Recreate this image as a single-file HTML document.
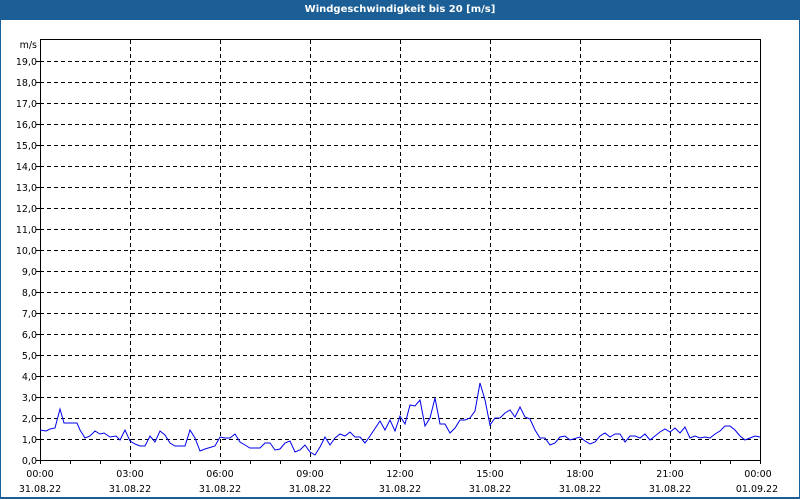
<!DOCTYPE html>
<html><head><meta charset="utf-8"><style>
html,body{margin:0;padding:0;background:#fff;}
body{width:800px;height:500px;position:relative;overflow:hidden;font-family:"DejaVu Sans","Liberation Sans",sans-serif;}
.frame{position:absolute;left:0;top:0;width:798px;height:497px;border-left:1px solid #1c5f96;border-right:1px solid #1c5f96;border-bottom:2px solid #1c5f96;}
.title{position:absolute;left:0;top:0;width:800px;height:20px;background:#1c5f96;color:#fff;font-size:10px;font-weight:bold;text-align:center;line-height:19px;}
svg{position:absolute;left:0;top:0}
svg text{font-family:"DejaVu Sans","Liberation Sans",sans-serif;font-size:9.5px;fill:#000}
</style></head><body>
<div class="frame"></div>
<div class="title">Windgeschwindigkeit bis 20 [m/s]</div>
<svg width="800" height="500" viewBox="0 0 800 500">
<g stroke="#000" stroke-width="1" stroke-dasharray="4,3" shape-rendering="crispEdges">
<line x1="40" y1="61.5" x2="760" y2="61.5"/><line x1="40" y1="82.5" x2="760" y2="82.5"/><line x1="40" y1="103.5" x2="760" y2="103.5"/><line x1="40" y1="124.5" x2="760" y2="124.5"/><line x1="40" y1="145.5" x2="760" y2="145.5"/><line x1="40" y1="166.5" x2="760" y2="166.5"/><line x1="40" y1="187.5" x2="760" y2="187.5"/><line x1="40" y1="208.5" x2="760" y2="208.5"/><line x1="40" y1="229.5" x2="760" y2="229.5"/><line x1="40" y1="250.5" x2="760" y2="250.5"/><line x1="40" y1="271.5" x2="760" y2="271.5"/><line x1="40" y1="292.5" x2="760" y2="292.5"/><line x1="40" y1="313.5" x2="760" y2="313.5"/><line x1="40" y1="334.5" x2="760" y2="334.5"/><line x1="40" y1="355.5" x2="760" y2="355.5"/><line x1="40" y1="376.5" x2="760" y2="376.5"/><line x1="40" y1="397.5" x2="760" y2="397.5"/><line x1="40" y1="418.5" x2="760" y2="418.5"/><line x1="40" y1="439.5" x2="760" y2="439.5"/>
<line x1="130.5" y1="40" x2="130.5" y2="466"/><line x1="220.5" y1="40" x2="220.5" y2="466"/><line x1="310.5" y1="40" x2="310.5" y2="466"/><line x1="400.5" y1="40" x2="400.5" y2="466"/><line x1="490.5" y1="40" x2="490.5" y2="466"/><line x1="580.5" y1="40" x2="580.5" y2="466"/><line x1="670.5" y1="40" x2="670.5" y2="466"/>
</g>
<g stroke="#000" stroke-width="1" shape-rendering="crispEdges" fill="none">
<rect x="40.5" y="39.5" width="720" height="421"/>
<path d="M40.5 460v4M70.5 460v4M100.5 460v4M160.5 460v4M190.5 460v4M250.5 460v4M280.5 460v4M340.5 460v4M370.5 460v4M430.5 460v4M460.5 460v4M520.5 460v4M550.5 460v4M610.5 460v4M640.5 460v4M700.5 460v4M730.5 460v4M760.5 460v4M36 61.5h4M36 82.5h4M36 103.5h4M36 124.5h4M36 145.5h4M36 166.5h4M36 187.5h4M36 208.5h4M36 229.5h4M36 250.5h4M36 271.5h4M36 292.5h4M36 313.5h4M36 334.5h4M36 355.5h4M36 376.5h4M36 397.5h4M36 418.5h4M36 439.5h4M36 460.5h4"/>
</g>
<polyline fill="none" stroke="#0000ee" stroke-width="1" points="40,430 46,431 50,429 55,428 60,409 64,423 77,423 80,430 85,438 90,436 95,431 100,434 104,433 110,437 116,436 120,440 125,430 130,441 135,444 140,446 145,446 150,436 155,442 160,431 165,435 170,443 175,446 185,446 190,430 195,438 200,451 205,449 215,446 220,437 225,438 230,438 235,434 240,442 245,445 250,448 260,448 265,443 270,443 275,450 280,449 285,443 290,441 295,452 300,450 305,445 310,452 315,455 320,447 325,437 330,445 335,438 340,434 345,436 350,432 355,437 360,437 365,443 370,436 380,421 385,430 390,420 395,431 400,416 405,424 410,405 415,406 420,400 425,426 430,418 435,398 440,424 445,424 450,433 455,428 460,420 465,420 470,418 475,411 480,383 485,400 490,425 495,418 500,418 505,413 510,410 515,417 520,407 525,417 530,419 535,430 540,438 545,438 550,445 555,443 560,437 565,436 570,440 580,437 585,441 590,444 595,442 600,436 605,433 610,437 615,434 620,434 625,442 630,436 635,436 640,438 645,434 650,440 655,436 660,432 665,429 670,432 675,428 680,433 685,427 690,438 695,436 700,438 705,437 710,438 715,434 720,431 725,426 730,426 735,430 740,436 745,440 750,438 755,436 760,437"/>
<g text-anchor="end">
<text x="37" y="48">m/s</text>
<text x="37" y="65">19,0</text><text x="37" y="86">18,0</text><text x="37" y="107">17,0</text><text x="37" y="128">16,0</text><text x="37" y="149">15,0</text><text x="37" y="170">14,0</text><text x="37" y="191">13,0</text><text x="37" y="212">12,0</text><text x="37" y="233">11,0</text><text x="37" y="254">10,0</text><text x="37" y="275">9,0</text><text x="37" y="296">8,0</text><text x="37" y="317">7,0</text><text x="37" y="338">6,0</text><text x="37" y="359">5,0</text><text x="37" y="380">4,0</text><text x="37" y="401">3,0</text><text x="37" y="422">2,0</text><text x="37" y="443">1,0</text><text x="37" y="464">0,0</text>
</g>
<g text-anchor="middle">
<text x="40" y="477">00:00</text><text x="130" y="477">03:00</text><text x="220" y="477">06:00</text><text x="310" y="477">09:00</text><text x="400" y="477">12:00</text><text x="490" y="477">15:00</text><text x="580" y="477">18:00</text><text x="670" y="477">21:00</text><text x="758" y="477">00:00</text>
<text x="40" y="492">31.08.22</text><text x="130" y="492">31.08.22</text><text x="220" y="492">31.08.22</text><text x="310" y="492">31.08.22</text><text x="400" y="492">31.08.22</text><text x="490" y="492">31.08.22</text><text x="580" y="492">31.08.22</text><text x="670" y="492">31.08.22</text><text x="757" y="492">01.09.22</text>
</g>
</svg>
</body></html>
